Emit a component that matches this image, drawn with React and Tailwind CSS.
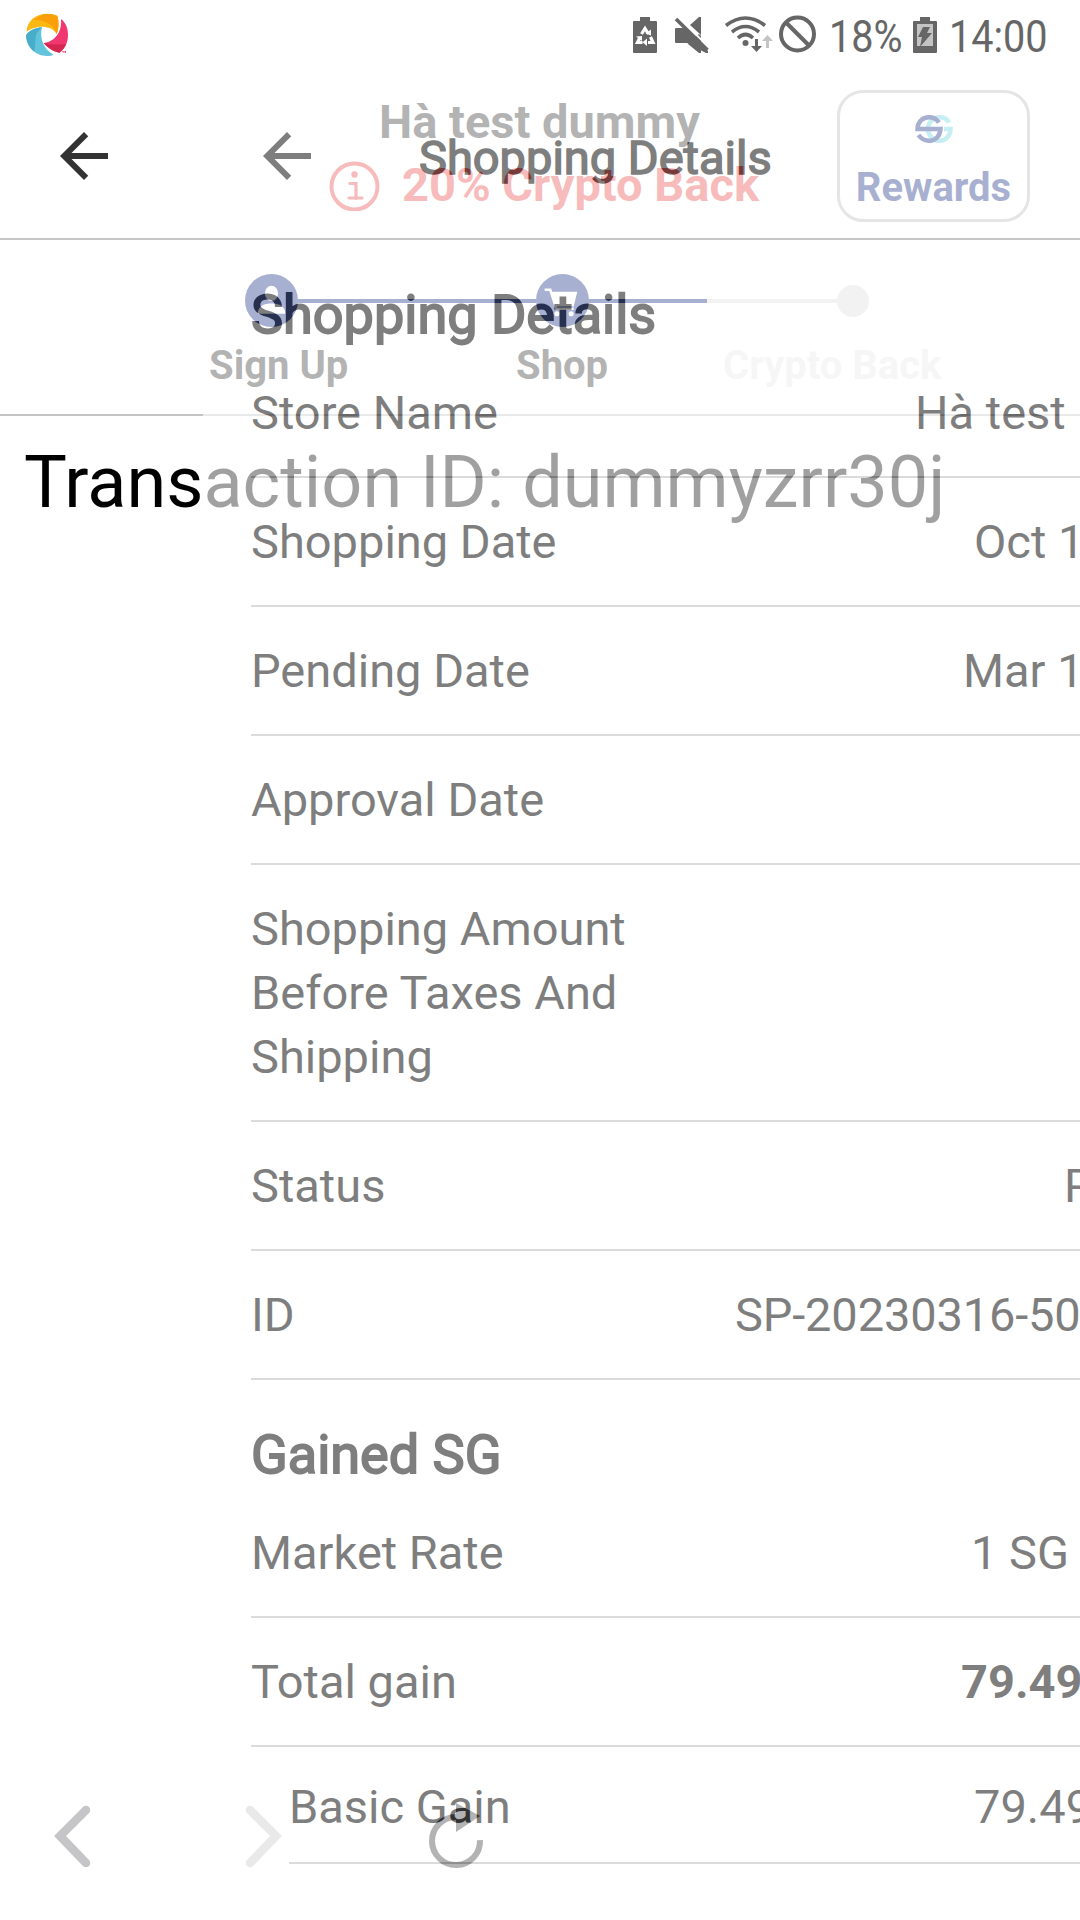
import React from "react";
import { MdArrowBack } from "react-icons/md";

function BrandSwirl() {
  return (
    <svg className="ml-[25px] mt-[13px] h-11 w-11 shrink-0" viewBox="75 39 132 132">
      <path d="M80 95C80 65 105 41 141 41C155 41 165 44 172 48C177 63 177 86 170 102C160 84 140 79 120 80C104 82 90 87 80 95Z" fill="#fbb812" />
      <path d="M116 50C140 38 160 42 172 48C177 63 177 86 170 102C162 76 142 60 100 60Z" fill="#fb9f09" />
      <path d="M183 57C197 67 204 85 204 104C204 128 194 148 178 158C158 154 143 143 131 129C160 126 187 100 183 57Z" fill="#f0376f" />
      <path d="M131 129C143 143 158 154 178 158C189 150 194 141 198 132C175 135 152 134 131 129Z" fill="#d42650" />
      <path d="M126 82C104 84 88 92 78 106C80 140 105 168 141 168C149 168 156 166 161 164C132 150 117 115 126 82Z" fill="#62c3dc" />
      <path d="M126 82C104 84 88 92 78 106C79 127 88 144 102 155C108 140 103 112 112 96Z" fill="#48adc8" />
      <path d="M186 153h5v5h-2zM193 153h5v5h-4z" fill="#f0376f" />
    </svg>
  );
}

function StatusIcons() {
  return (
    <svg className="h-[68px] w-[200px]" viewBox="0 0 200 68" fill="none">
      <g fill="#666">
        <path d="M18 17h10v4h6a1 1 0 0 1 1 1v30a1 1 0 0 1-1 1H12a1 1 0 0 1-1-1V22a1 1 0 0 1 1-1h6z" />
        <path d="M54 28h8L86 51v2h-2L65 43H54a1 1 0 0 1-1-1V29a1 1 0 0 1 1-1zM77 17h2v18L68 25z" />
        <path d="M77 34l2 2v17h-2L66 44z" />
      </g>
      <g stroke="#fff" strokeWidth="3.200">
        <path d="M19.500 34l3.500-5.500 3.500 5.500M28.500 37l2.500 5.500h-5M20.500 42.500h-5l2.500-5" />
      </g>
      <path d="M25 38.500v7.500l-4.500-3.700zM29 29.500v6l-5.500-2zM14 36.500l6-.5 0 5z" fill="#fff" />
      <path d="M56 16.500l31.500 31.500" stroke="#fff" strokeWidth="2" />
      <path d="M54 19l31.500 31" stroke="#666" strokeWidth="3.600" />
      <g stroke="#666" strokeWidth="3.600">
        <path d="M104 25.500Q123.500 10.500 143 25.500" />
        <path d="M110 32Q123.500 21 137 32" />
        <path d="M116 38Q123.500 31 131 38" />
      </g>
      <circle cx="123.500" cy="43" r="3" fill="#666" />
      <path d="M133 39h3v7h4l-5.500 6-5.500-6h4z" fill="#666" />
      <path d="M144 48h3v-7h4l-5.500-6-5.500 6h4z" fill="#c4c4c4" />
      <circle cx="175.500" cy="34" r="16.500" stroke="#666" strokeWidth="4" />
      <path d="M164 22.500l23 23" stroke="#666" strokeWidth="4" />
    </svg>
  );
}

function ChargingBattery() {
  return (
    <svg className="ml-[11px] h-[68px] w-[26px] shrink-0" viewBox="0 0 26 68">
      <path d="M8 17h10v4h6a1 1 0 0 1 1 1v30a1 1 0 0 1-1 1H2a1 1 0 0 1-1-1V22a1 1 0 0 1 1-1h6z" fill="#666" />
      <path d="M5 24h16v22H5z" fill="#c4c4c4" />
      <path d="M11 27h7l-3 6h5L8 47l2-10H6z" fill="#666" />
    </svg>
  );
}

function StatusBar() {
  return (
    <div className="flex h-[68px] w-full items-start">
      <BrandSwirl />
      <div className="ml-auto flex h-[68px] text-[45px] leading-[68px] text-[#666]">
        <StatusIcons />
        <span className="ml-[7px] w-[72px] origin-left scale-x-[0.88] whitespace-nowrap pt-[2.500px]">18%</span>
        <ChargingBattery />
        <span className="ml-[11px] w-[131px] origin-left scale-x-[0.88] whitespace-nowrap pt-[2.500px]">14:00</span>
      </div>
    </div>
  );
}

function BackArrow() {
  return <MdArrowBack className="ml-12 mt-[52px] h-[72px] w-[72px] shrink-0 text-[#333]" />;
}

function SgMark() {
  return (
    <svg className="mt-[22px] h-7 w-[38px]" viewBox="0 0 38 28" fill="none" strokeWidth="4.500">
      <path d="M34 7.500C32 4 28 2.200 24.500 2.200C17.500 2.200 13 8 13 14S18 25.800 24.500 25.800C31 25.800 35.500 20.500 35.500 14H29" stroke="#63d4dc" />
      <path d="M24 7.500C21.500 4 18 2.200 14 2.200C7.500 2.200 2.500 7 2.500 14H25.500C25 21 20.500 25.800 14.500 25.800C9.500 25.800 6 23.500 3.500 20" stroke="#132b81" />
    </svg>
  );
}

function OfferHeader() {
  return (
    <header className="flex h-[172px] border-b-2 border-[#c5c5c5]">
      <BackArrow />
      <div className="ml-[209px] w-[434px] shrink-0 pt-[26px] text-[47px] font-bold leading-[56px]">
        <div className="pr-[13px] text-center text-[#333]">Hà test dummy</div>
        <div className="mt-[7px] flex items-center text-[#ec4848]">
          <svg className="h-[51px] w-[51px] shrink-0" viewBox="0 0 51 51" fill="none" stroke="currentColor">
            <circle cx="25.500" cy="26.500" r="23" strokeWidth="4" />
            <circle cx="25.500" cy="14.500" r="3.200" fill="currentColor" stroke="none" />
            <path d="M21 23.500h6v15M20 38h13" strokeWidth="3.200" strokeLinecap="round" />
          </svg>
          <span className="ml-[22px] whitespace-nowrap">20% Crypto Back</span>
        </div>
      </div>
      <div className="ml-[74px] mt-[22px] flex h-[132px] w-[193px] shrink-0 flex-col items-center rounded-[26px] border-[3px] border-[#bbb]">
        <SgMark />
        <span className="mt-[21px] text-[40px] font-bold leading-[48px] text-[#132b81]">Rewards</span>
      </div>
    </header>
  );
}

function Stepper() {
  return (
    <section className="h-[176px] border-b-2 border-[#c4c4c4]">
      <div className="box-content flex h-[53px] items-center pl-[245px] pt-[34px]">
        <svg className="h-[53px] w-[53px] shrink-0" viewBox="0 0 52 52">
          <circle cx="26" cy="26" r="26" fill="#132b81" />
          <ellipse cx="26" cy="19" rx="6.500" ry="7.500" fill="#fff" />
          <path d="M12.500 39c0-8 7-10 13.500-10s13.500 2 13.500 10z" fill="#fff" />
        </svg>
        <div className="h-1 w-[238px] bg-[#132b81]" />
        <svg className="h-[53px] w-[53px] shrink-0" viewBox="0 0 52 52">
          <circle cx="26" cy="26" r="26" fill="#132b81" />
          <path d="M8.500 15.500h5.500l6 18.500h17" stroke="#fff" strokeWidth="2.500" fill="none" />
          <path d="M15 17.500H40.500L37 32H19.500z" fill="#fff" />
          <circle cx="20.500" cy="39" r="2.500" fill="#fff" />
          <circle cx="34.500" cy="39" r="2.500" fill="#fff" />
        </svg>
        <div className="h-1 w-[118px] bg-[#132b81]" />
        <div className="h-1 w-[130px] bg-[#dcdcdc]" />
        <div className="h-8 w-8 rounded-full bg-[#dcdcdc]" />
      </div>
      <div className="mt-[15px] flex text-[40px] font-bold leading-[48px] text-[#333]">
        <span className="ml-[209px] w-[307px]">Sign Up</span>
        <span className="w-[207px]">Shop</span>
        <span className="text-[#e9e9e9]">Crypto Back</span>
      </div>
    </section>
  );
}

function BrowserToolbar() {
  return (
    <nav className="mb-[50px] mt-auto flex h-[68px] items-center pl-[52px]">
      <svg className="h-[68px] w-10" viewBox="0 0 40 68" fill="none" stroke="#c5c5c7" strokeWidth="8.500" strokeLinecap="round">
        <path d="M34 8L8 34l26 27" />
      </svg>
      <svg className="ml-[152px] h-[68px] w-10" viewBox="0 0 40 68" fill="none" stroke="#c4c4c4" strokeWidth="8.500" strokeLinecap="round">
        <path d="M6 8l26 26L6 61" />
      </svg>
      <svg className="ml-[142px] h-[68px] w-[60px]" viewBox="0 0 60 68" fill="none">
        <path d="M54 38A24 24 0 1 1 30 15" stroke="#333" strokeWidth="6" />
        <path d="M30 1L54 14L30 30z" fill="#333" />
      </svg>
    </nav>
  );
}

function OfferScreen() {
  return (
    <div className="flex h-[1852px] flex-col">
      <OfferHeader />
      <Stepper />
      <p className="mt-[19px] whitespace-nowrap pl-[24px] text-[72px] leading-[96px] text-black">
        Transaction ID: dummyzrr30j
      </p>
      <BrowserToolbar />
    </div>
  );
}

function Row({ label, value, valueClass }) {
  return (
    <div className="flex items-center justify-between border-b-2 border-[#c6c6c6] py-[31.500px]">
      <span className="w-[400px]">{label}</span>
      <span className={"shrink-0 whitespace-nowrap " + valueClass}>{value}</span>
    </div>
  );
}

function SectionTitle({ children }) {
  return (
    <h2 className="h-[109px] pt-[42px] text-[54px] font-normal leading-[66px] [-webkit-text-stroke:1.8px_#333]">
      {children}
    </h2>
  );
}

function DetailsScreen() {
  return (
    <div className="absolute left-[203px] top-[68px] h-[1852px] w-[877px] overflow-hidden bg-white text-[47px] leading-[64px] text-[#333] opacity-[0.627]">
      <header className="flex h-[172px] border-b-2 border-[#c5c5c5]">
        <BackArrow />
        <h1 className="ml-[96px] mt-[58px] whitespace-nowrap font-normal [-webkit-text-stroke:1.5px_#333]">
          Shopping Details
        </h1>
      </header>
      <main className="pl-12">
        <SectionTitle>Shopping Details</SectionTitle>
        <Row label="Store Name" value="Hà test" valueClass="w-[165px]" />
        <Row label="Shopping Date" value="Oct 1" valueClass="w-[106px]" />
        <Row label="Pending Date" value="Mar 1" valueClass="w-[117px]" />
        <Row label="Approval Date" value="" valueClass="w-0" />
        <Row label="Shopping Amount Before Taxes And Shipping" value="" valueClass="w-0" />
        <Row label="Status" value="P" valueClass="w-[16px]" />
        <Row label="ID" value="SP-20230316-50" valueClass="w-[345px] tracking-[-0.150px]" />
        <SectionTitle>Gained SG</SectionTitle>
        <Row label="Market Rate" value="1 SG" valueClass="w-[109px]" />
        <Row label="Total gain" value="79.49" valueClass="w-[119px] font-bold" />
        <div className="ml-[38px] flex h-[117px] items-center justify-between border-b-2 border-[#c6c6c6] pt-[5px]">
          <span>Basic Gain</span>
          <span className="w-[106px] shrink-0">79.49</span>
        </div>
      </main>
    </div>
  );
}

export default function App() {
  return (
    <div className="relative h-[1920px] w-[1080px] overflow-hidden bg-white font-['Roboto',sans-serif]">
      <StatusBar />
      <OfferScreen />
      <DetailsScreen />
    </div>
  );
}
